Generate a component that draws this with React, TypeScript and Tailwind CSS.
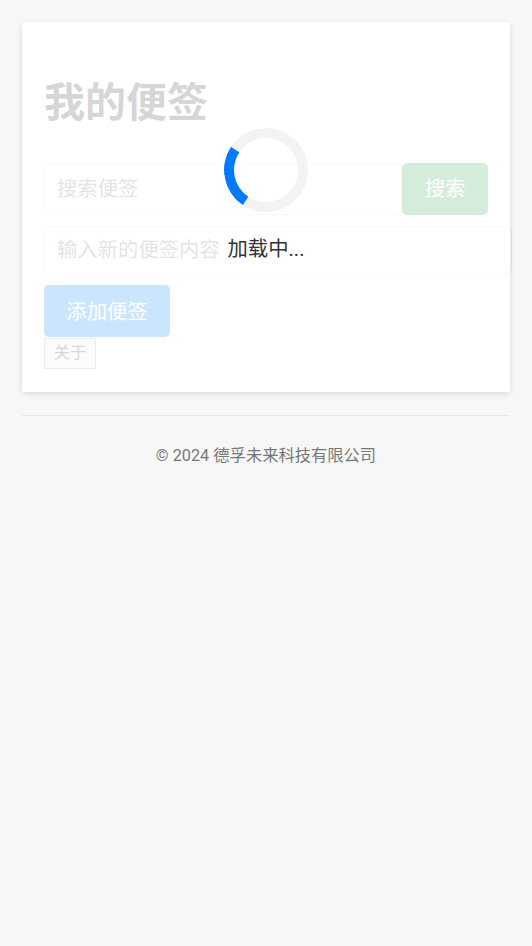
const font = "font-['Roboto','Noto_Sans_CJK_SC',sans-serif]";

function LoadingOverlay() {
  return (
    <div className="absolute inset-0 flex flex-col items-center justify-center bg-white/80">
      <div className="h-[84px] w-[84px] rotate-[-11.5deg] rounded-full border-[10px] border-[#f3f3f3] border-l-[#007bff]" />
      <p className="my-4 h-[42px] text-[20.35px] leading-[42px] text-[#333]">加载中...</p>
    </div>
  );
}

export default function App() {
  return (
    <div className={`${font} min-h-[946px] bg-[#f7f7f7] p-[22px] text-[#333]`}>
      <div className="relative h-[370px] rounded-[5px] bg-white p-[22px] shadow-[0_2px_6px_rgba(0,0,0,0.12)]">
        <h1 className="mt-[35px] h-[48px] text-[41px] leading-[48px] font-bold">我的便签</h1>
        <div className="mt-[36px] flex w-[444px]">
          <input
            className="h-[52px] min-w-0 flex-1 rounded-[5px] border border-[#ddd] px-3 text-[20.35px] outline-none placeholder:text-[#757575]"
            placeholder="搜索便签"
          />
          <button className="h-[52px] w-[86px] rounded-[5px] bg-[#28a745] text-[20.35px] text-white">搜索</button>
        </div>
        <input
          className="mt-[11px] block h-[48px] w-[468px] rounded-[5px] border border-[#ddd] px-3 text-[20.35px] outline-none placeholder:text-[#757575]"
          placeholder="输入新的便签内容"
        />
        <button className="mt-[11px] block h-[52px] w-[126px] rounded-[5px] bg-[#007bff] pt-[2px] text-[20.35px] text-white">添加便签</button>
        <button className="mt-px block h-[31px] w-[52px] border border-[#999] bg-[#e9e9e9] text-[16.3px] text-[#333]">关于</button>
        <LoadingOverlay />
      </div>
      <div className="mt-[23px] border-t border-[#e6e6e6] pt-[28px] text-center text-[16.3px] leading-[24px] text-[#777]">
        © 2024 德孚未来科技有限公司
      </div>
    </div>
  );
}
